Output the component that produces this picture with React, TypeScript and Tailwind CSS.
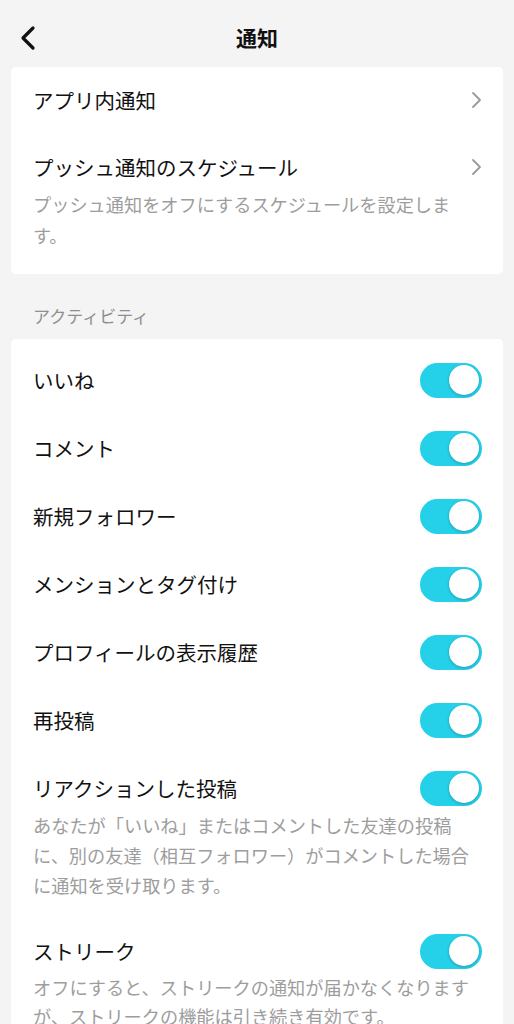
import React from 'react';

const font = { fontFamily: '"Noto Sans CJK JP", "Noto Sans", sans-serif' };

const Chevron = () => (
  <svg width="12" height="18" viewBox="0 0 12 18" className="shrink-0">
    <path d="M3 2l7 7-7 7" fill="none" stroke="#9a9a9a" strokeWidth="1.8" strokeLinecap="round" strokeLinejoin="round" />
  </svg>
);

const Toggle = () => (
  <div className="relative w-[62px] h-[35px] rounded-full bg-[#25d0e9] shrink-0">
    <div className="absolute right-[3px] top-[2.5px] w-[30px] h-[30px] rounded-full bg-white shadow-[0_1px_3px_rgba(0,0,0,0.25)]" />
  </div>
);

const toggles = ['いいね', 'コメント', '新規フォロワー', 'メンションとタグ付け', 'プロフィールの表示履歴', '再投稿'];

const label = 'text-[20.5px] font-normal leading-[28px] text-[#111]';
const desc = 'mt-[8px] text-[18.2px] text-[#9d9d9d] whitespace-pre-line';

export default function App() {
  return (
    <div className="min-h-screen bg-[#f4f4f4] text-[#111] overflow-hidden" style={font}>
      {/* Header */}
      <div className="relative h-[67px] flex items-center justify-center">
        <svg width="20" height="26" viewBox="0 0 20 26" className="absolute left-[18px] top-[25px]">
          <path d="M15 3L5 13l10 10" fill="none" stroke="#111" strokeWidth="3.2" strokeLinecap="round" strokeLinejoin="round" />
        </svg>
        <h1 className="text-[21px] font-bold leading-[28px] mt-[7px]">通知</h1>
      </div>

      {/* Card 1 */}
      <div className="mx-[11px] bg-white rounded-[5px] pl-[22px] pr-[21px] pb-[23px]">
        <div className="h-[66px] flex items-center justify-between">
          <span className={label}>アプリ内通知</span>
          <Chevron />
        </div>
        <div className="pt-[20px]">
          <div className="flex items-center justify-between">
            <span className={label}>プッシュ通知のスケジュール</span>
            <Chevron />
          </div>
          <p className={`${desc} leading-[31px]`}>
            {'プッシュ通知をオフにするスケジュールを設定しま\nす。'}
          </p>
        </div>
      </div>

      {/* Section label */}
      <div className="pt-[30px] pb-[11px] pl-[33px] text-[17px] leading-[24px] text-[#8f8f8f]">アクティビティ</div>

      {/* Card 2 */}
      <div className="mx-[11px] bg-white rounded-[5px] pl-[22px] pr-[21px] pt-[7px] pb-[20px]">
        {toggles.map((t) => (
          <div key={t} className="h-[68px] flex items-center justify-between">
            <span className={label}>{t}</span>
            <Toggle />
          </div>
        ))}
        <div className="pt-[20px] pb-[17px]">
          <div className="flex items-center justify-between h-[28px]">
            <span className={label}>リアクションした投稿</span>
            <Toggle />
          </div>
          <p className={`${desc} leading-[30px]`}>
            {'あなたが「いいね」またはコメントした友達の投稿\nに、別の友達（相互フォロワー）がコメントした場合\nに通知を受け取ります。'}
          </p>
        </div>
        <div className="pt-[20px]">
          <div className="flex items-center justify-between h-[28px]">
            <span className={label}>ストリーク</span>
            <Toggle />
          </div>
          <p className={`${desc} leading-[29px]`}>
            {'オフにすると、ストリークの通知が届かなくなります\nが、ストリークの機能は引き続き有効です。'}
          </p>
        </div>
      </div>
    </div>
  );
}
